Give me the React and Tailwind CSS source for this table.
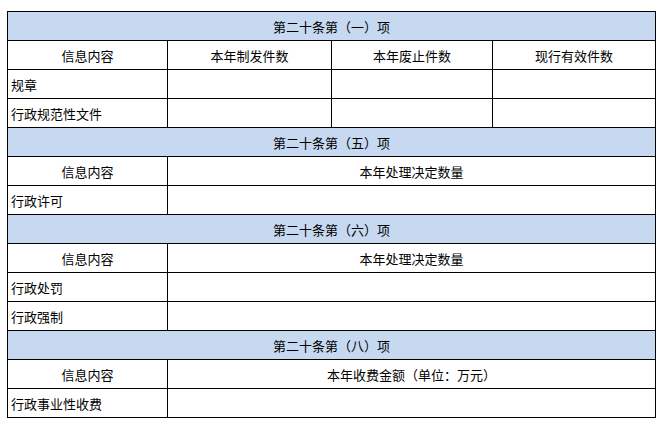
import React from 'react';

const cell = 'border border-black text-[13px] leading-none p-0';
const head = 'border border-black bg-[#c6d9f1] text-center text-[13px] leading-none p-0';

function Section({ title }) {
  return (
    <tr className="h-[29px]">
      <td colSpan={4} className={head}>{title}</td>
    </tr>
  );
}

function LabelRow({ label, cols = 3 }) {
  if (cols === 1) {
    return (
      <tr className="h-[29px]">
        <td className={`${cell} pl-[3px]`}>{label}</td>
        <td colSpan={3} className={cell}></td>
      </tr>
    );
  }
  return (
    <tr className="h-[29px]">
      <td className={`${cell} pl-[3px]`}>{label}</td>
      <td className={cell}></td>
      <td className={cell}></td>
      <td className={cell}></td>
    </tr>
  );
}

function HeaderRow({ text }) {
  return (
    <tr className="h-[29px]">
      <td className={`${cell} text-center`}>信息内容</td>
      <td colSpan={3} className={`${cell} text-center`}>{text}</td>
    </tr>
  );
}

export default function App() {
  return (
    <div
      className="w-[664px] h-[427px] bg-white pt-[11px] pl-[7px] text-black"
      style={{ fontFamily: '"Noto Sans CJK SC", "Liberation Sans", sans-serif' }}
    >
      <table className="border-collapse table-fixed w-[648px]">
        <colgroup>
          <col className="w-[160px]" />
          <col className="w-[164px]" />
          <col className="w-[161px]" />
          <col className="w-[163px]" />
        </colgroup>
        <tbody>
          <Section title="第二十条第（一）项" />
          <tr className="h-[29px]">
            <td className={`${cell} text-center`}>信息内容</td>
            <td className={`${cell} text-center`}>本年制发件数</td>
            <td className={`${cell} text-center`}>本年废止件数</td>
            <td className={`${cell} text-center`}>现行有效件数</td>
          </tr>
          <LabelRow label="规章" />
          <LabelRow label="行政规范性文件" />

          <Section title="第二十条第（五）项" />
          <HeaderRow text="本年处理决定数量" />
          <LabelRow label="行政许可" cols={1} />

          <Section title="第二十条第（六）项" />
          <HeaderRow text="本年处理决定数量" />
          <LabelRow label="行政处罚" cols={1} />
          <LabelRow label="行政强制" cols={1} />

          <Section title="第二十条第（八）项" />
          <HeaderRow text="本年收费金额（单位：万元）" />
          <LabelRow label="行政事业性收费" cols={1} />
        </tbody>
      </table>
    </div>
  );
}
